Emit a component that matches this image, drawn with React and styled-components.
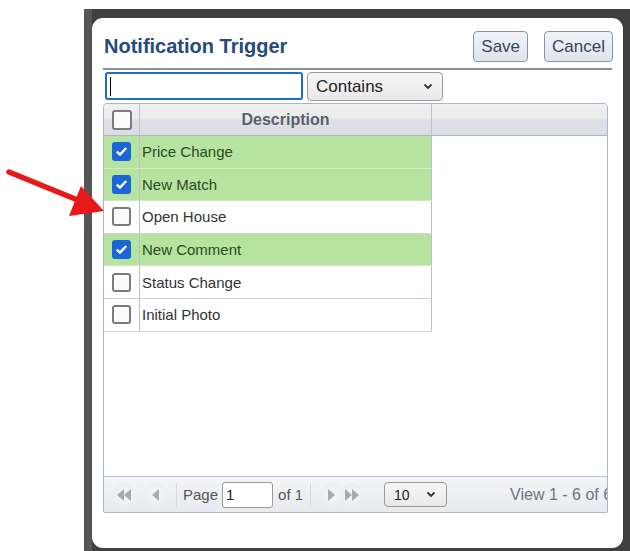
import React from "react";
import styled, { createGlobalStyle } from "styled-components";

const GlobalStyle = createGlobalStyle`
  html, body {
    margin: 0;
    padding: 0;
    background: #fff;
  }
  body {
    font-family: "Liberation Sans", Arial, sans-serif;
  }
`;

const triggers = [
  { label: "Price Change", checked: true },
  { label: "New Match", checked: true },
  { label: "Open House", checked: false },
  { label: "New Comment", checked: true },
  { label: "Status Change", checked: false },
  { label: "Initial Photo", checked: false },
];

const Page = styled.div`
  position: relative;
  width: 630px;
  height: 551px;
  padding: 9px 0 0 84px;
  box-sizing: border-box;
  overflow: hidden;
`;

const Backdrop = styled.div`
  width: 546px;
  height: 542px;
  background: linear-gradient(90deg, #565656 0, #565656 8px, #3f3f3f 8px);
  padding: 9px 0 0 8px;
  box-sizing: border-box;
`;

const Dialog = styled.div`
  width: 531px;
  height: 530px;
  background: #fff;
  border-radius: 11px;
  padding: 0 11px;
  box-sizing: border-box;
  display: flex;
  flex-direction: column;
`;

const DialogHeader = styled.div`
  display: flex;
  align-items: center;
  justify-content: space-between;
  padding-top: 7px;
  height: 52px;
  box-sizing: border-box;
  border-bottom: 2px solid #8e8e8e;
`;

const Title = styled.h1`
  margin: 0 0 0 1px;
  font-size: 20px;
  font-weight: bold;
  color: #254a7c;
`;

const Actions = styled.div`
  display: flex;
  gap: 16px;
  margin-right: -1px;
`;

const ActionButton = styled.button`
  height: 31px;
  padding: 0 7px;
  font-family: inherit;
  font-size: 17px;
  color: #34475f;
  background: linear-gradient(#f1f3f7, #dfe4eb);
  border: 1px solid #8494a9;
  border-radius: 4px;
`;

const Toolbar = styled.div`
  display: flex;
  gap: 4px;
  margin-top: 2px;
  padding-left: 2px;
`;

const SearchBox = styled.div`
  width: 198px;
  height: 28px;
  box-sizing: border-box;
  border: 2px solid #1d6ad0;
  border-radius: 3px;
  display: flex;
  align-items: center;
  padding-left: 3px;
`;

const Caret = styled.span`
  width: 1px;
  height: 19px;
  background: #000;
`;

const Select = styled.div`
  width: ${({ $w }) => $w}px;
  height: ${({ $h }) => $h}px;
  margin-left: ${({ $ml }) => $ml || 0}px;
  flex: none;
  box-sizing: border-box;
  display: flex;
  align-items: center;
  justify-content: space-between;
  padding: 0 ${({ $pr }) => $pr}px 0 ${({ $pl }) => $pl}px;
  font-size: ${({ $fs }) => $fs}px;
  color: #222;
  background: linear-gradient(#f6f6f6, #e9e9e9);
  border: 1px solid #9a9a9a;
  border-radius: 4px;
`;

const Chevron = () => (
  <svg width="10" height="7" viewBox="0 0 10 7">
    <path d="M1.5 1.5 L5 5 L8.5 1.5" fill="none" stroke="#333" strokeWidth="1.8" />
  </svg>
);

const Grid = styled.div`
  margin-top: 2px;
  width: 505px;
  height: 410px;
  box-sizing: border-box;
  border: 1px solid #a8b7ca;
  border-radius: 4px 4px 2px 2px;
  display: flex;
  flex-direction: column;
  overflow: hidden;
`;

const GridHeader = styled.div`
  display: flex;
  height: 31px;
  flex-shrink: 0;
  border-bottom: 1px solid #a8b8cb;
  background: linear-gradient(#f1f1f1 0%, #ebebeb 48%, #dfe0e4 52%, #dcdde2 100%);
`;

const HeaderCell = styled.div`
  width: ${({ $w }) => ($w ? `${$w}px` : "auto")};
  flex: ${({ $w }) => ($w ? "none" : 1)};
  box-sizing: border-box;
  display: flex;
  align-items: center;
  justify-content: center;
  border-right: ${({ $w }) => ($w ? "1px solid #bcc3cc" : "none")};
  font-size: 16px;
  font-weight: bold;
  color: #5a616c;
`;

const GridBody = styled.div`
  flex: 1;
  background: #fff;
`;

const Row = styled.div`
  display: flex;
  width: 328px;
  height: 32.6px;
  box-sizing: border-box;
  border-bottom: 1px solid ${({ $on }) => ($on ? "#cfe8c2" : "#cdd4dd")};
  background: ${({ $on }) => ($on ? "#b6e3a0" : "#fff")};
`;

const CheckCell = styled.div`
  width: 36px;
  flex: none;
  box-sizing: border-box;
  border-right: 1px solid #b8c2ce;
  display: flex;
  align-items: center;
  justify-content: center;
`;

const TextCell = styled.div`
  flex: 1;
  box-sizing: border-box;
  border-right: 1px solid #b3bfcc;
  display: flex;
  align-items: center;
  padding-left: 2px;
  font-size: 15px;
  color: ${({ $on }) => ($on ? "#2d4a1c" : "#333")};
`;

const Box = styled.span`
  width: ${({ $size }) => $size}px;
  height: ${({ $size }) => $size}px;
  box-sizing: border-box;
  border-radius: 3px;
  display: flex;
  align-items: center;
  justify-content: center;
  background: ${({ $on }) => ($on ? "#1b66d6" : "#fbfbfb")};
  border: ${({ $on }) => ($on ? "none" : "2px solid #7b7b7b")};
`;

const Checkbox = ({ on, size = 19 }) => (
  <Box $on={on} $size={size}>
    {on && (
      <svg width="13" height="11" viewBox="0 0 13 11">
        <path d="M1.8 5.6 L5 8.6 L11.2 2" fill="none" stroke="#fff" strokeWidth="2.4" />
      </svg>
    )}
  </Box>
);

const Pager = styled.div`
  display: flex;
  align-items: center;
  height: 36px;
  flex-shrink: 0;
  box-sizing: border-box;
  border-top: 1px solid #b6c3d3;
  background: linear-gradient(#f4f5f7, #e8eaee);
  padding-left: 9px;
  font-size: 15px;
  color: #555;
  white-space: nowrap;
  overflow: hidden;
`;

const NavButton = styled.span`
  width: ${({ $w }) => $w}px;
  height: 24px;
  margin-left: ${({ $ml }) => $ml}px;
  flex: none;
  display: flex;
  align-items: center;
  justify-content: center;
  border-radius: 50%;
  background: radial-gradient(circle, #f3f3f3 40%, #e6e8eb 100%);
`;

const Separator = styled.span`
  width: 1px;
  height: 24px;
  margin-left: ${({ $ml }) => $ml}px;
  flex: none;
  background: #d6dae0;
`;

const Label = styled.span`
  margin-left: ${({ $ml }) => $ml}px;
  flex: none;
  font-size: ${({ $fs }) => $fs || 15}px;
  color: ${({ $muted }) => ($muted ? "#6c7480" : "#555")};
`;

const PageInput = styled.span`
  width: 51px;
  height: 26px;
  margin-left: 4px;
  flex: none;
  box-sizing: border-box;
  border: 1px solid #9a9a9a;
  border-radius: 3px;
  background: #fff;
  display: flex;
  align-items: center;
  padding-left: 3px;
  font-size: 15px;
  color: #222;
`;

const Tri = ({ dir = "left", double }) => {
  const left = dir === "left";
  const one = left ? "M7 0 L0 6 L7 12 Z" : "M0 0 L7 6 L0 12 Z";
  const two = left ? "M14 0 L7 6 L14 12 Z" : "M7 0 L14 6 L7 12 Z";
  return (
    <svg width={double ? 14 : 8} height="12" viewBox={`0 0 ${double ? 14 : 8} 12`}>
      <path d={one} fill="#a3abb5" />
      {double && <path d={two} fill="#a3abb5" />}
    </svg>
  );
};

const Arrow = styled.svg`
  position: absolute;
  left: 0;
  top: 0;
  pointer-events: none;
`;

export default function App() {
  return (
    <Page>
      <GlobalStyle />
      <Backdrop>
        <Dialog>
          <DialogHeader>
            <Title>Notification Trigger</Title>
            <Actions>
              <ActionButton>Save</ActionButton>
              <ActionButton>Cancel</ActionButton>
            </Actions>
          </DialogHeader>

          <Toolbar>
            <SearchBox>
              <Caret />
            </SearchBox>
            <Select $w={136} $h={29} $pl={8} $pr={9} $fs={17}>
              Contains
              <Chevron />
            </Select>
          </Toolbar>

          <Grid>
            <GridHeader>
              <HeaderCell $w={36}>
                <Checkbox on={false} size={20} />
              </HeaderCell>
              <HeaderCell $w={292}>Description</HeaderCell>
              <HeaderCell />
            </GridHeader>

            <GridBody>
              {triggers.map((t) => (
                <Row key={t.label} $on={t.checked}>
                  <CheckCell>
                    <Checkbox on={t.checked} />
                  </CheckCell>
                  <TextCell $on={t.checked}>{t.label}</TextCell>
                </Row>
              ))}
            </GridBody>

            <Pager>
              <NavButton $w={22} $ml={0}>
                <Tri double />
              </NavButton>
              <NavButton $w={22} $ml={10}>
                <Tri />
              </NavButton>
              <Separator $ml={9} />
              <Label $ml={6}>Page</Label>
              <PageInput>1</PageInput>
              <Label $ml={5}>of 1</Label>
              <Separator $ml={7} />
              <NavButton $w={20} $ml={11}>
                <Tri dir="right" />
              </NavButton>
              <NavButton $w={20} $ml={0}>
                <Tri dir="right" double />
              </NavButton>
              <Select $w={63} $h={25} $ml={22} $pl={9} $pr={10} $fs={14}>
                10
                <Chevron />
              </Select>
              <Label $ml={63} $fs={16} $muted>
                View 1 - 6 of 6
              </Label>
            </Pager>
          </Grid>
        </Dialog>
      </Backdrop>

      <Arrow width="112" height="230" viewBox="0 0 112 230">
        <line x1="9" y1="172" x2="80" y2="201" stroke="#e8191b" strokeWidth="5.5" strokeLinecap="round" />
        <polygon points="81,186 104,211 69,216" fill="#e8191b" />
      </Arrow>
    </Page>
  );
}
